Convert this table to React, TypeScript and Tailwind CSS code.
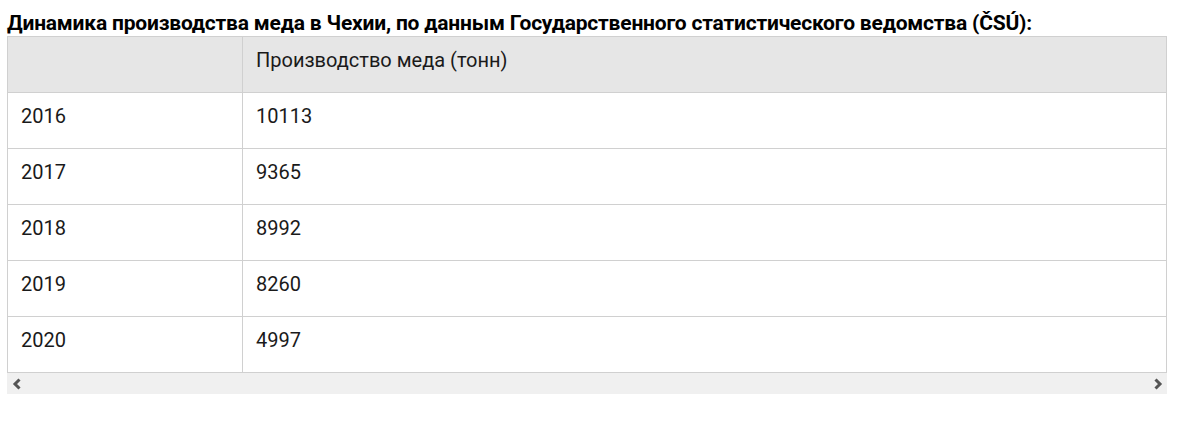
import React from "react";

const rows: [string, string][] = [
  ["2016", "10113"],
  ["2017", "9365"],
  ["2018", "8992"],
  ["2019", "8260"],
  ["2020", "4997"],
];

export default function App() {
  return (
    <div className="bg-white w-[1179px] h-[423px] pt-[11px] pl-[7px] font-['Roboto',sans-serif]">
      <h3 className="text-[21px] leading-[25px] font-bold text-black tracking-[-0.2px] whitespace-nowrap">
        Динамика производства меда в Чехии, по данным Государственного статистического ведомства (ČSÚ):
      </h3>
      <div className="w-[1160px]">
        <table className="w-full border-collapse text-[20px] text-[#1a1a1a]">
          <thead>
            <tr className="bg-[#e6e6e6] h-[56px]">
              <th className="w-[235px] border border-[#d0d0d0] px-[13px] pb-[10px] text-left font-normal"></th>
              <th className="border border-[#d0d0d0] px-[13px] pb-[10px] text-left font-normal">
                Производство меда (тонн)
              </th>
            </tr>
          </thead>
          <tbody>
            {rows.map(([year, value]) => (
              <tr key={year} className="h-[56px]">
                <td className="border border-[#d0d0d0] px-[13px] pb-[10px]">{year}</td>
                <td className="border border-[#d0d0d0] px-[13px] pb-[10px]">{value}</td>
              </tr>
            ))}
          </tbody>
        </table>
        {/* полоса прокрутки */}
        <div className="h-[21px] bg-[#f0f0f0] flex items-center justify-between pl-[5px] pr-[4px]">
          <svg width="10" height="12" viewBox="0 0 10 12">
            <path d="M7.5 1.5 L3 6 L7.5 10.5" fill="none" stroke="#555" strokeWidth="3" />
          </svg>
          <svg width="10" height="12" viewBox="0 0 10 12">
            <path d="M2.5 1.5 L7 6 L2.5 10.5" fill="none" stroke="#555" strokeWidth="3" />
          </svg>
        </div>
      </div>
    </div>
  );
}
